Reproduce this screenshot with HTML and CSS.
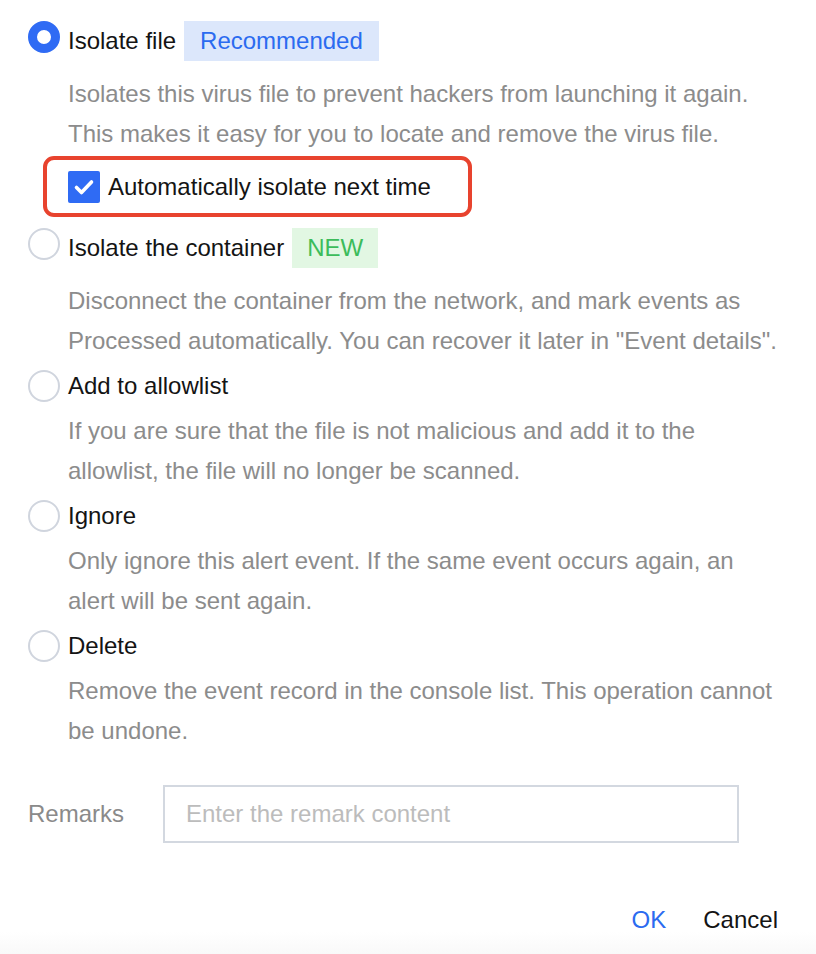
FILE: index.html
```html
<!DOCTYPE html>
<html lang="en">
<head>
<meta charset="utf-8">
<title>Handle virus event</title>
<link rel="stylesheet" href="styles.css">
</head>
<body>
<div class="panel">
  <div class="option">
    <div class="opt-head tagged">
      <span class="radio checked"></span>
      <span class="label">Isolate file</span>
      <span class="tag tag-blue">Recommended</span>
    </div>
    <div class="desc desc-tagged">Isolates this virus file to prevent hackers from launching it again.<br>This makes it easy for you to locate and remove the virus file.</div>
    <div class="auto-box">
      <span class="checkbox"><svg width="32" height="32" viewBox="0 0 32 32"><path d="M8.5 16.5 L13.5 21.5 L23.5 11" fill="none" stroke="#fff" stroke-width="3.6" stroke-linecap="round" stroke-linejoin="round"/></svg></span>
      <span class="auto-text">Automatically isolate next time</span>
    </div>
  </div>

  <div class="option option-2">
    <div class="opt-head tagged">
      <span class="radio"></span>
      <span class="label">Isolate the container</span>
      <span class="tag tag-green">NEW</span>
    </div>
    <div class="desc desc-tagged">Disconnect the container from the network, and mark events as<br>Processed automatically. You can recover it later in "Event details".</div>
  </div>

  <div class="option">
    <div class="opt-head">
      <span class="radio"></span>
      <span class="label">Add to allowlist</span>
    </div>
    <div class="desc">If you are sure that the file is not malicious and add it to the<br>allowlist, the file will no longer be scanned.</div>
  </div>

  <div class="option">
    <div class="opt-head">
      <span class="radio"></span>
      <span class="label">Ignore</span>
    </div>
    <div class="desc">Only ignore this alert event. If the same event occurs again, an<br>alert will be sent again.</div>
  </div>

  <div class="option">
    <div class="opt-head">
      <span class="radio"></span>
      <span class="label">Delete</span>
    </div>
    <div class="desc">Remove the event record in the console list. This operation cannot<br>be undone.</div>
  </div>

  <div class="remarks">
    <span class="remarks-label">Remarks</span>
    <input class="remarks-input" type="text" placeholder="Enter the remark content">
  </div>

  <div class="footer">
    <span class="btn btn-ok">OK</span>
    <span class="btn btn-cancel">Cancel</span>
  </div>
</div>
</body>
</html>
```

FILE: styles.css
```css
html, body {
  margin: 0;
  padding: 0;
}
body {
  width: 816px;
  height: 954px;
  overflow: hidden;
  font-family: "Liberation Sans", Arial, Helvetica, sans-serif;
  font-size: 24px;
  color: #141414;
  background: linear-gradient(to bottom, #ffffff 0, #ffffff 932px, #f9f9f9 954px);
}
.panel {
  padding: 21px 0 0 28px;
  display: flex;
  flex-direction: column;
}
.option {
  display: flex;
  flex-direction: column;
  margin-bottom: 5px;
}
.option-2 {
  margin-top: 6px;
}
.opt-head {
  display: flex;
  align-items: flex-start;
  height: 40px;
  line-height: 40px;
}
.radio {
  box-sizing: border-box;
  width: 32px;
  height: 32px;
  border-radius: 50%;
  border: 2px solid #d0d5de;
  background: #fff;
  margin-top: 4px;
  margin-right: 8px;
  flex: none;
}
.opt-head.tagged .radio {
  margin-top: 0;
}
.radio.checked {
  border: 9px solid #2f6bf4;
}
.label {
  white-space: nowrap;
}
.tag {
  display: inline-block;
  height: 40px;
  line-height: 40px;
  padding: 0 16px;
  margin-left: 8px;
  white-space: nowrap;
}
.tag-blue {
  background: #dce7fb;
  color: #2b6bf0;
}
.tag-green {
  background: #e2f7e3;
  color: #3cbc5b;
  padding: 0 15px;
}
.desc {
  padding-left: 40px;
  margin-top: 5px;
  line-height: 40px;
  color: #8c8c8c;
  white-space: nowrap;
}
.desc.desc-tagged {
  margin-top: 13px;
}
.auto-box {
  box-sizing: border-box;
  margin-top: 2px;
  margin-left: 15px;
  width: 429px;
  height: 61px;
  border: 4px solid #e8432e;
  border-radius: 11px;
  padding-left: 21px;
  display: flex;
  align-items: center;
  gap: 8px;
}
.checkbox {
  width: 32px;
  height: 32px;
  background: #2f6bf4;
  border-radius: 2px;
  display: flex;
  flex: none;
}
.auto-text {
  color: #141414;
  white-space: nowrap;
}
.remarks {
  display: flex;
  align-items: center;
  margin-top: 29px;
}
.remarks-label {
  width: 135px;
  color: #8a8a8a;
}
.remarks-input {
  box-sizing: border-box;
  width: 576px;
  height: 58px;
  border: 2px solid #d3d8e0;
  border-radius: 0;
  padding: 0 21px;
  font-family: "Liberation Sans", Arial, Helvetica, sans-serif;
  font-size: 24px;
  color: #141414;
  outline: none;
  background: #fff;
}
.remarks-input::placeholder {
  color: #bcbcbc;
}
.footer {
  display: flex;
  justify-content: flex-end;
  gap: 37px;
  padding-right: 38px;
  margin-top: 57px;
  line-height: 40px;
}
.btn-ok {
  color: #2b6bf0;
}
.btn-cancel {
  color: #141414;
}
```
